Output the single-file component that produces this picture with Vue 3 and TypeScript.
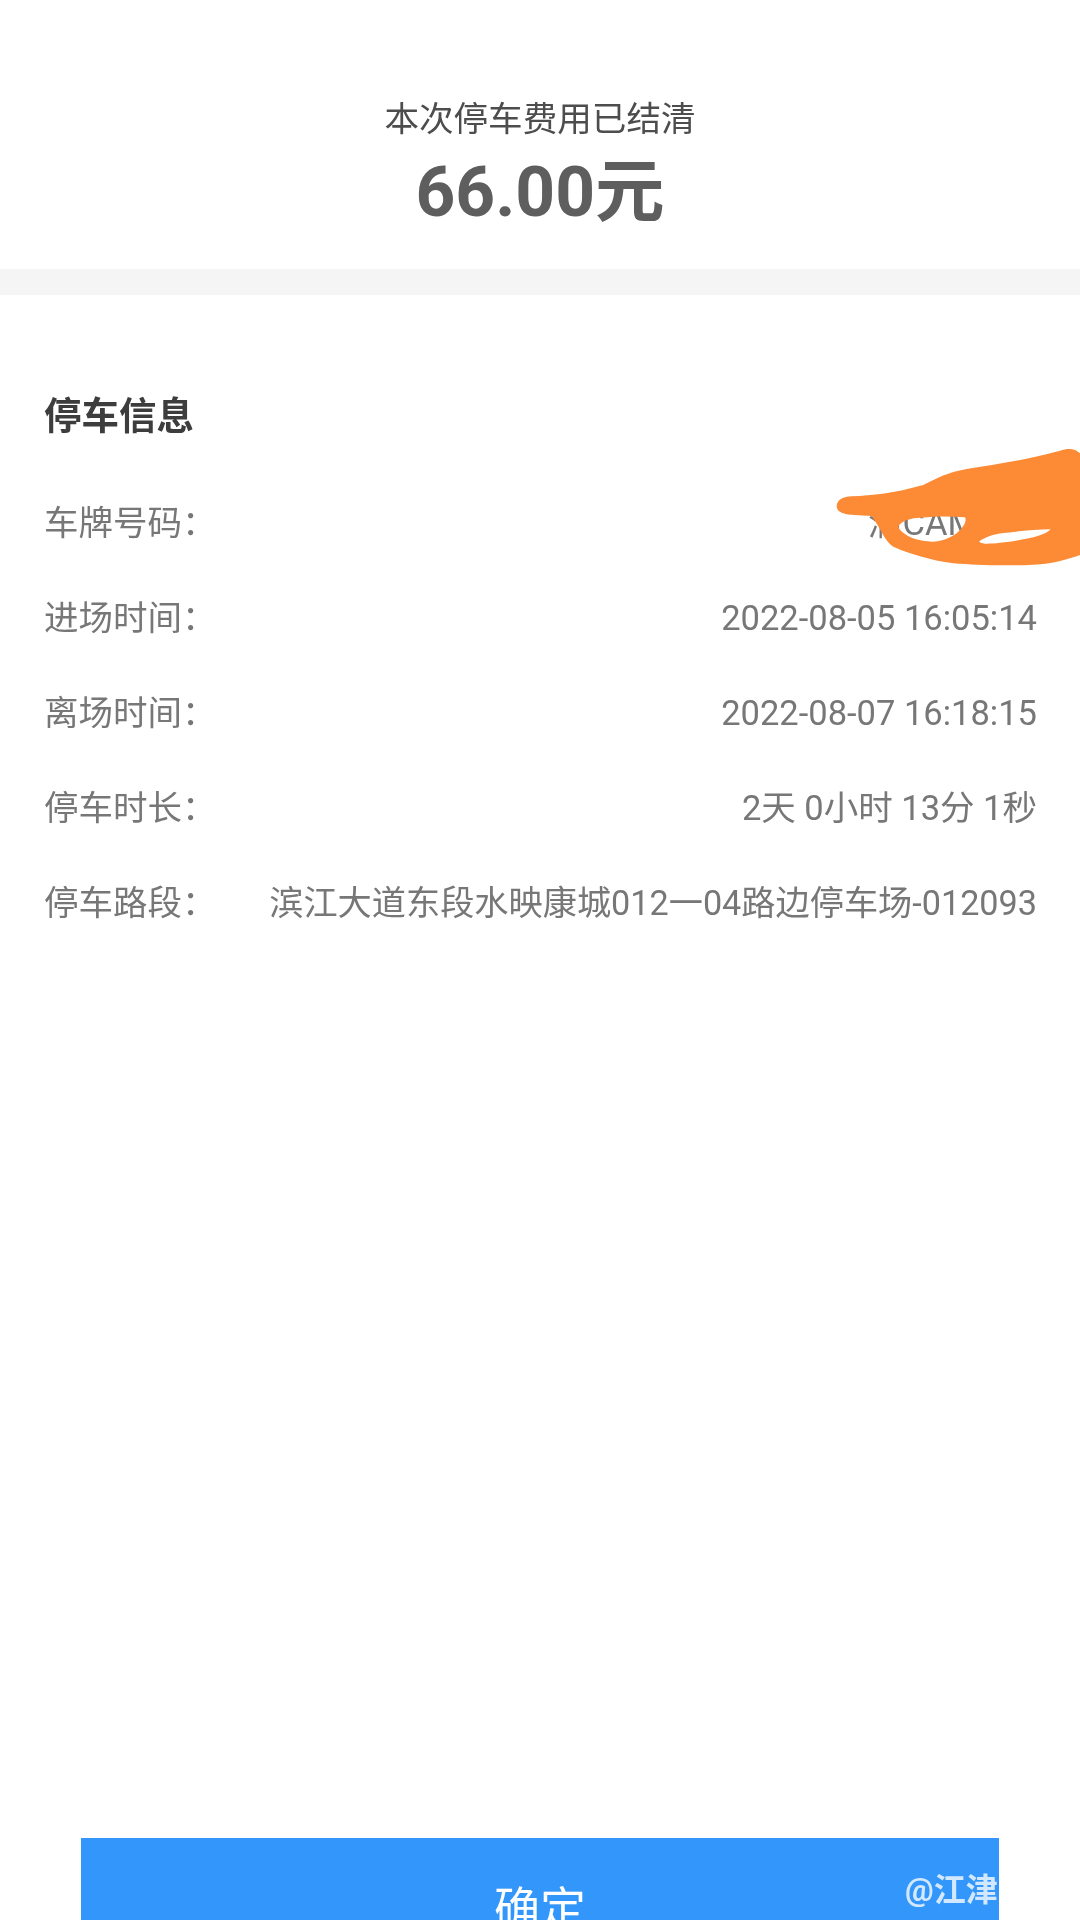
<template>
  <div class="page">
    <header class="summary">
      <p class="summary-text">本次停车费用已结清</p>
      <p class="summary-amount">{{ amount }}元</p>
    </header>
    <div class="band"></div>

    <section class="info">
      <h2 class="info-title">停车信息</h2>
      <div v-for="row in rows" :key="row.label" class="info-row">
        <span class="info-label">{{ row.label }}：</span>
        <span class="info-value">{{ row.value }}</span>
      </div>
    </section>

    <button class="confirm" type="button">确定</button>

    <!-- hand-drawn redaction over the plate number -->
    <svg class="scribble" viewBox="0 0 900 450" width="300" height="150" aria-hidden="true">
      <path
        fill="#fd8a35"
        fill-rule="evenodd"
        d="M170 228 C172 208 190 200 215 199 C280 196 340 190 430 165 C470 145 500 128 560 117 C640 104 740 90 840 62 C865 54 885 55 900 70 L900 375 C860 388 820 402 760 404 C680 408 590 406 520 400 C450 390 390 372 340 350 C315 335 305 300 275 258 C240 256 205 256 190 250 C177 246 170 238 170 228 Z
           M355 288 C365 275 385 266 410 264 C460 258 510 258 555 262 C562 275 548 295 530 310 C510 325 480 336 455 335 C425 333 395 328 375 312 C363 304 355 296 355 288 Z
           M598 334 C615 322 640 312 670 309 C720 303 770 298 812 298 C800 310 780 318 750 324 C710 333 650 342 615 341 C605 340 598 338 598 334 Z"
      />
    </svg>

    <span class="watermark">@江津</span>
  </div>
</template>

<script setup lang="ts">
interface InfoRow {
  label: string
  value: string
}

const amount = '66.00'

const rows: InfoRow[] = [
  { label: '车牌号码', value: '渝CAM****' },
  { label: '进场时间', value: '2022-08-05 16:05:14' },
  { label: '离场时间', value: '2022-08-07 16:18:15' },
  { label: '停车时长', value: '2天 0小时 13分 1秒' },
  { label: '停车路段', value: '滨江大道东段水映康城012一04路边停车场-012093' }
]
</script>

<style>
html,
body {
  margin: 0;
  background: #fff;
}
</style>

<style scoped>
.page {
  position: relative;
  display: flex;
  flex-direction: column;
  width: 1080px;
  height: 1920px;
  overflow: hidden;
  background: #fff;
  font-family: Roboto, "Noto Sans CJK SC", sans-serif;
  /* the source is a soft, recompressed photo of a phone screen */
  filter: blur(0.6px);
}

.summary {
  height: 269px;
  padding-top: 95px;
  box-sizing: border-box;
  text-align: center;
}

.summary-text {
  margin: 0;
  font-size: 34.6px;
  line-height: 48px;
  color: #4d4d4d;
}

.summary-amount {
  margin: 5px 0 0;
  font-size: 69.5px;
  font-weight: 700;
  line-height: 90px;
  color: #5e5e5e;
}

.band {
  flex-shrink: 0;
  height: 26px;
  background: #f5f5f5;
}

.info {
  padding: 95px 43px 0 44px;
}

.info-title {
  margin: 0 0 34px;
  font-size: 37.5px;
  font-weight: 700;
  line-height: 52px;
  color: #3d3d3d;
}

.info-row {
  display: flex;
  justify-content: space-between;
  font-size: 34.5px;
  line-height: 95px;
  color: #777;
}

.info-row:last-child .info-value {
  font-size: 34.2px;
}

.confirm {
  flex-shrink: 0;
  height: 134px;
  margin: auto 81px -52px;
  padding: 0;
  border: 0;
  background: #3296fa;
  font-family: inherit;
  font-size: 46px;
  color: #fff;
}

.scribble {
  position: absolute;
  left: 780px;
  top: 430px;
}

.watermark {
  position: absolute;
  left: 905px;
  top: 1870px;
  font-size: 32px;
  font-weight: 700;
  line-height: 40px;
  color: rgba(255, 255, 255, 0.78);
}
</style>
